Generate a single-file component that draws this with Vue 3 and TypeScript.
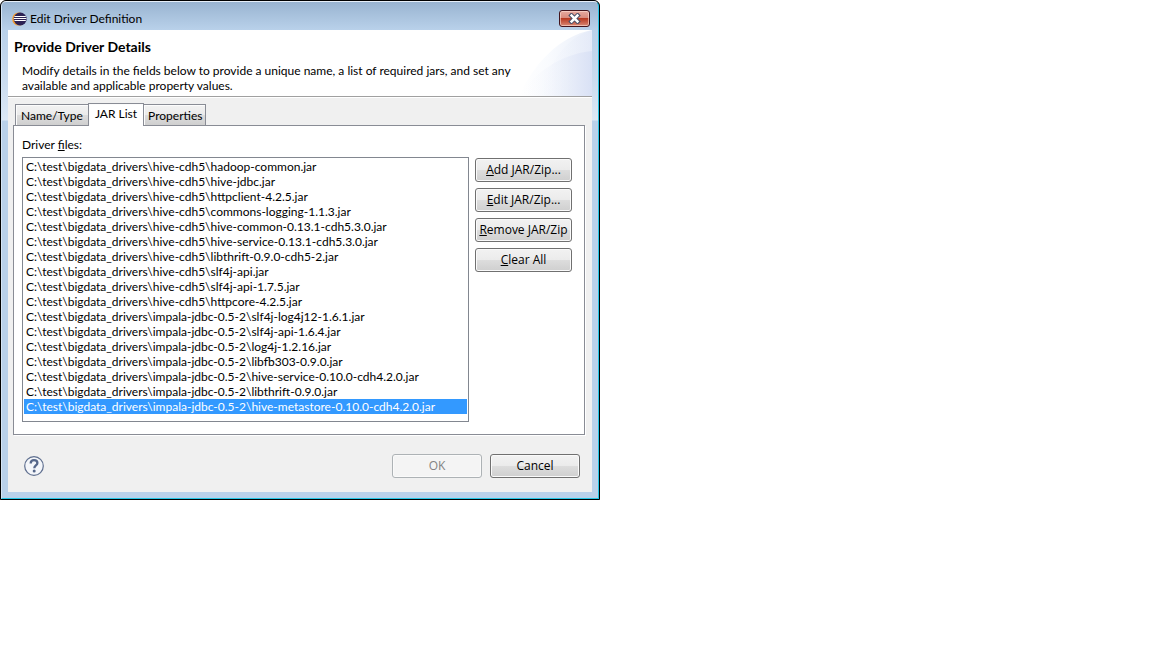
<script setup lang="ts">
import { ref } from 'vue'

interface Action {
  key: string
  rest: string
}

const hive = 'C:\\test\\bigdata_drivers\\hive-cdh5\\'
const impala = 'C:\\test\\bigdata_drivers\\impala-jdbc-0.5-2\\'

const files = ref<string[]>([
  ...[
    'hadoop-common.jar',
    'hive-jdbc.jar',
    'httpclient-4.2.5.jar',
    'commons-logging-1.1.3.jar',
    'hive-common-0.13.1-cdh5.3.0.jar',
    'hive-service-0.13.1-cdh5.3.0.jar',
    'libthrift-0.9.0-cdh5-2.jar',
    'slf4j-api.jar',
    'slf4j-api-1.7.5.jar',
    'httpcore-4.2.5.jar',
  ].map((n) => hive + n),
  ...[
    'slf4j-log4j12-1.6.1.jar',
    'slf4j-api-1.6.4.jar',
    'log4j-1.2.16.jar',
    'libfb303-0.9.0.jar',
    'hive-service-0.10.0-cdh4.2.0.jar',
    'libthrift-0.9.0.jar',
    'hive-metastore-0.10.0-cdh4.2.0.jar',
  ].map((n) => impala + n),
])
const selected = ref<string>(files.value[files.value.length - 1])

const tabs: string[] = ['Name/Type', 'JAR List', 'Properties']
const activeTab = ref<string>('JAR List')

const actions: Action[] = [
  { key: 'A', rest: 'dd JAR/Zip...' },
  { key: 'E', rest: 'dit JAR/Zip...' },
  { key: 'R', rest: 'emove JAR/Zip' },
  { key: 'C', rest: 'lear All' },
]
</script>

<template>
  <div class="window" role="dialog" aria-labelledby="window-title">
    <div class="frame">
      <div class="titlebar">
        <svg class="logo" viewBox="0 0 15 14" aria-hidden="true">
          <circle cx="6.8" cy="7" r="6.6" fill="#f39a2d" />
          <circle cx="8.2" cy="7" r="6.5" fill="#2c2255" />
          <path d="M2.4 4.5h11.4M1.8 6.5h12.6M2.4 8.5h11.4" stroke="#fff" stroke-width="1" />
        </svg>
        <span id="window-title" class="title">Edit Driver Definition</span>
        <button class="close" type="button" aria-label="Close">
          <svg viewBox="0 0 13 11" aria-hidden="true">
            <path d="M3.4 2.4L9.6 8.6M9.6 2.4L3.4 8.6" stroke="#4b5068" stroke-width="4.4" stroke-linecap="square" />
            <path d="M3.6 2.6L9.4 8.4M9.4 2.6L3.6 8.4" stroke="#fff" stroke-width="2.5" stroke-linecap="square" />
          </svg>
        </button>
      </div>

      <div class="body">
        <header class="banner">
          <svg class="swoosh" viewBox="0 0 75 66" aria-hidden="true">
            <defs>
              <linearGradient id="arc-a" x1="0" x2="1">
                <stop offset="0" stop-color="#fff" />
                <stop offset="0.4" stop-color="#f9fbfe" />
                <stop offset="1" stop-color="#e9eef9" />
              </linearGradient>
              <linearGradient id="arc-b" x1="0" x2="1">
                <stop offset="0" stop-color="#f3f6fc" stop-opacity="0" />
                <stop offset="1" stop-color="#dfe6f7" />
              </linearGradient>
              <linearGradient id="arc-c" x1="0" x2="1">
                <stop offset="0" stop-color="#fff" stop-opacity="0" />
                <stop offset="1" stop-color="#d9e1f5" />
              </linearGradient>
            </defs>
            <path d="M2 66C16 35 42 6 75 0V66Z" fill="url(#arc-a)" />
            <path d="M24 66C30 36 47 8 75 0V66Z" fill="url(#arc-b)" opacity=".5" />
            <path d="M2 66C18 42 44 24 75 21V66Z" fill="url(#arc-c)" />
          </svg>
          <h1>Provide Driver Details</h1>
          <p>Modify details in the fields below to provide a unique name, a list of required jars, and set any available and applicable property values.</p>
        </header>

        <main class="content">
          <div class="tabs" role="tablist">
            <button
              v-for="tab in tabs"
              :key="tab"
              type="button"
              role="tab"
              class="tab"
              :class="{ active: tab === activeTab }"
              :aria-selected="tab === activeTab"
              @click="activeTab = tab"
            >{{ tab }}</button>
          </div>
          <section class="panel" role="tabpanel">
            <label for="driver-files">Driver <u>f</u>iles:</label>
            <div class="columns">
              <select id="driver-files" v-model="selected" class="files" size="17">
                <option v-for="file in files" :key="file" :value="file">{{ file }}</option>
              </select>
              <div class="actions">
                <button v-for="a in actions" :key="a.key" type="button" class="btn"><u>{{ a.key }}</u>{{ a.rest }}</button>
              </div>
            </div>
          </section>
        </main>

        <footer class="footer">
          <button class="help" type="button" aria-label="Help">
            <svg viewBox="0 0 20 20" aria-hidden="true">
              <circle cx="10" cy="10" r="9.3" fill="#f4f6fa" stroke="#5f6f8f" stroke-width="1.2" />
              <path d="M6.7 7.5C6.7 5.2 8.1 4.1 10 4.1C12 4.1 13.4 5.2 13.4 7C13.4 9.5 10.3 9.5 10.3 12.2" fill="none" stroke="#56678a" stroke-width="2.3" />
              <circle cx="10.2" cy="15" r="1.5" fill="#56678a" />
            </svg>
          </button>
          <button class="btn wide" type="button" disabled>OK</button>
          <button class="btn wide" type="button">Cancel</button>
        </footer>
      </div>
    </div>
  </div>
</template>

<style>
body {
  margin: 0;
  background: #fff;
}
</style>

<style scoped>
* {
  box-sizing: border-box;
}

.window {
  width: 100%;
  max-width: 600px;
  border: 1px solid #000;
  border-radius: 6px 6px 0 0;
  background: #000;
  color: #000;
  font: 12px/15px Lato, "Open Sans", "Noto Sans", sans-serif;
}

.frame {
  border: 1px solid #26c6e6;
  border-top-color: #e6eff9;
  border-left-color: #d5e5f5;
  border-radius: 5px 5px 0 0;
  padding: 0 6px 6px;
  background: linear-gradient(#99b4d1 0, #b9d1ea 28px, #cbdcef 80px, #dce8f5 118px, #b9d1ea 119px);
}

.titlebar {
  display: flex;
  align-items: center;
  height: 28px;
  padding: 5px 3px 0 5px;
  margin: 0 -1px;
}

.logo {
  width: 15px;
  height: 14px;
  margin-right: 3px;
}

.title {
  flex: 1;
}

.close {
  display: flex;
  align-items: center;
  justify-content: center;
  width: 31px;
  height: 17px;
  padding: 0;
  border: 1px solid #43141c;
  border-radius: 3px;
  background: linear-gradient(#e6aaa0 0, #d98a7c 48%, #b83a22 50%, #c8604a 75%, #d98b76 100%);
  box-shadow: inset 0 0 0 1px rgba(255, 225, 215, 0.6);
}

.close svg {
  width: 13px;
  height: 11px;
}

.body {
  background: #f0f0f0;
}

.banner {
  position: relative;
  padding: 9px 60px 3px 6px;
  border-bottom: 1px solid #a0a0a0;
  background: #fff;
  box-shadow: 0 1px 0 #fff;
}

.swoosh {
  position: absolute;
  top: 0;
  right: 0;
  width: 75px;
  height: 66px;
}

h1 {
  margin: 0 0 8px;
  font-size: 14px;
  line-height: 16px;
  font-weight: 700;
}

p {
  position: relative;
  margin: 0 0 0 8px;
}

.content {
  padding: 6px 7px 0 5px;
}

.tabs {
  display: flex;
  align-items: flex-end;
  padding-left: 2px;
}

.tab {
  height: 21px;
  padding: 0 3px 0 4px;
  border: 1px solid #898c95;
  border-bottom: 0;
  background: linear-gradient(#f2f2f2 0, #ebebeb 50%, #dddddd 50%, #cfcfcf 100%);
  box-shadow: inset 1px 1px 0 #fcfcfc;
  color: #000;
  font: inherit;
}

.tab + .tab {
  border-left: 0;
}

.tab:first-child {
  border-right: 0;
  padding: 0 5px;
}

.tab.active {
  position: relative;
  height: 23px;
  margin-bottom: -1px;
  padding: 0 6px 3px;
  border-left: 1px solid #898c95;
  background: #fff;
}

.panel {
  padding: 11px 12px 12px 8px;
  border: 1px solid #898c95;
  background: #fff;
  box-shadow: 1px 1px 0 #fff;
}

label {
  display: block;
  margin-bottom: 5px;
}

.columns {
  display: flex;
  gap: 6px;
}

.files {
  flex: 1;
  min-width: 0;
  height: 265px;
  padding: 1px;
  border: 1px solid #828790;
  border-radius: 0;
  outline: 0;
  background: #fff;
  color: #000;
  font: inherit;
  overflow: hidden;
}

.files option {
  height: 15px;
  min-height: 15px;
  padding: 0 2px;
  line-height: 15px;
}

.files option:checked {
  background: linear-gradient(#39f, #39f);
  -webkit-text-fill-color: #fff;
}

.actions {
  display: flex;
  flex-direction: column;
  gap: 6px;
  width: 97px;
  padding-top: 1px;
}

.btn {
  height: 24px;
  padding: 0 0 1px;
  border: 1px solid #707070;
  border-radius: 3px;
  background: linear-gradient(#f2f2f2 0, #ebebeb 50%, #dddddd 50%, #cfcfcf 100%);
  box-shadow: inset 0 0 0 1px #fafafa;
  color: #000;
  font: 12px/15px "Open Sans", "Noto Sans", sans-serif;
  white-space: nowrap;
}

.btn:disabled {
  border-color: #adb2b5;
  background: #f4f4f4;
  color: #838383;
}

.wide {
  width: 90px;
}

.footer {
  display: flex;
  align-items: center;
  gap: 8px;
  padding: 19px 12px 14px 16px;
}

.help {
  width: 20px;
  height: 20px;
  margin-right: auto;
  padding: 0;
  border: 0;
  background: none;
}

.help svg {
  display: block;
  width: 20px;
  height: 20px;
}
</style>
